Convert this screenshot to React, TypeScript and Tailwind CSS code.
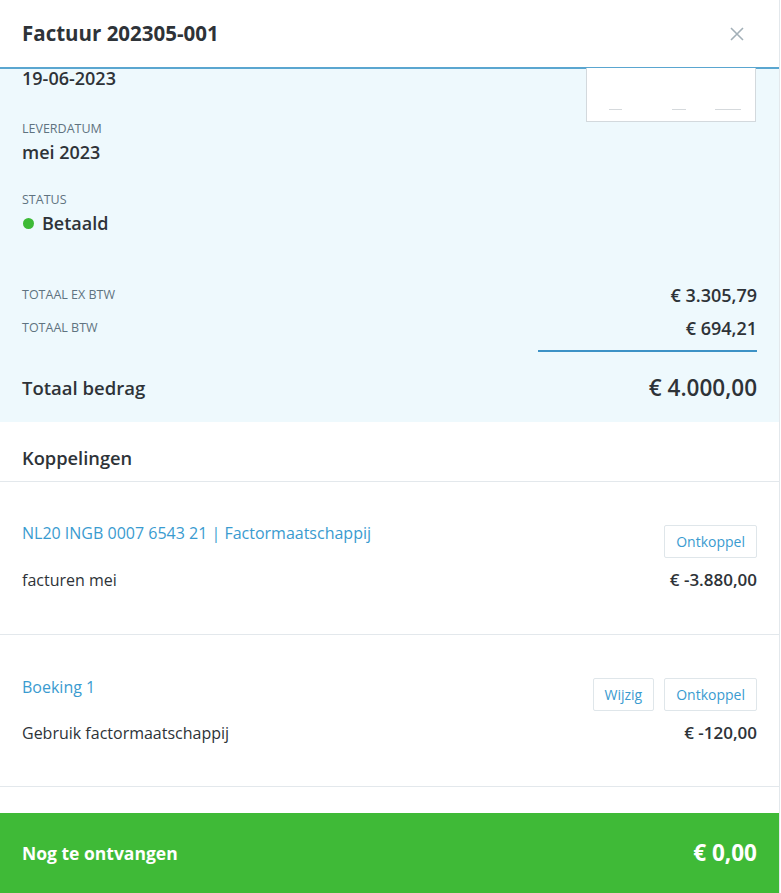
import React from "react";

interface Koppeling {
  id: number;
  title: string;
  description: string;
  amount: string;
  editable: boolean;
}

const koppelingen: Koppeling[] = [
  {
    id: 1,
    title: "NL20 INGB 0007 6543 21 | Factormaatschappij",
    description: "facturen mei",
    amount: "€ -3.880,00",
    editable: false,
  },
  {
    id: 2,
    title: "Boeking 1",
    description: "Gebruik factormaatschappij",
    amount: "€ -120,00",
    editable: true,
  },
];

const SmallButton = ({ label }: { label: string }) => (
  <button className="h-[33px] px-[11px] border border-[#dfe6ea] rounded-[2px] bg-white text-[14px] text-[#3a9bd0] leading-none">
    {label}
  </button>
);

const App = () => {
  return (
    <div
      className="w-[781px] h-[893px] overflow-hidden bg-white text-[#2e3338]"
      style={{ fontFamily: '"Open Sans", "Noto Sans", sans-serif' }}
    >
      <div className="w-[780px] h-full border-r border-[#e3e8ec] flex flex-col">
        {/* Header */}
        <div className="h-[69px] shrink-0 flex items-center justify-between px-[22px] border-b-2 border-[#5aa6d0]">
          <h1 className="text-[20.5px] font-bold text-[#2e3338]">Factuur 202305-001</h1>
          <button className="w-[16px] h-[16px] mr-[12px] text-[#a3b0b8]">
            <svg viewBox="0 0 16 16" className="w-full h-full" fill="none" stroke="currentColor" strokeWidth="1.6">
              <path d="M2 2 L14 14 M14 2 L2 14" />
            </svg>
          </button>
        </div>

        {/* Invoice details */}
        <div className="bg-[#eef9fd] px-[22px] pb-[19px] shrink-0">
          <div className="flex justify-between items-start">
            <div>
              <div className="text-[18px] font-semibold leading-[18px]">19-06-2023</div>
              <div className="mt-[34px] text-[12.5px] leading-[16px] text-[#5f7380] uppercase">Leverdatum</div>
              <div className="mt-[5px] text-[18px] font-semibold leading-[20px]">mei 2023</div>
              <div className="mt-[30px] text-[12.5px] leading-[16px] text-[#5f7380] uppercase">Status</div>
              <div className="mt-[5px] flex items-center gap-[8px] h-[20px]">
                <span className="w-[11px] h-[11px] rounded-full bg-[#3dba36] ml-px" />
                <span className="text-[18px] font-semibold leading-[20px]">Betaald</span>
              </div>
            </div>
            <div className="w-[170px] h-[54px] mt-[-1px] mr-px bg-white border-x border-b border-[#d3d9dd] flex items-end justify-between px-[22px] pb-[11px]">
              <div className="w-[13px] h-px bg-[#d5d9dc]" />
              <div className="w-[14px] h-px bg-[#d5d9dc] ml-[20px]" />
              <div className="w-[26px] h-px bg-[#d5d9dc] mr-[-8px]" />
            </div>
          </div>

          <div className="mt-[52px] flex justify-between items-center h-[20px]">
            <span className="text-[12.5px] text-[#5f7380] uppercase">Totaal ex BTW</span>
            <span className="text-[18px] font-semibold">€ 3.305,79</span>
          </div>
          <div className="mt-[13px] flex justify-between items-center h-[20px]">
            <span className="text-[12.5px] text-[#5f7380] uppercase">Totaal BTW</span>
            <span className="text-[18px] font-semibold">€ 694,21</span>
          </div>
          <div className="mt-[12px] flex justify-end">
            <div className="w-[219px] h-[2px] bg-[#3d92c6]" />
          </div>
          <div className="mt-[21px] flex justify-between items-center h-[30px]">
            <span className="text-[18.5px] font-semibold">Totaal bedrag</span>
            <span className="text-[22.5px] font-semibold">€ 4.000,00</span>
          </div>
        </div>

        {/* Koppelingen */}
        <div className="px-[22px] pt-[24px] pb-[11px] border-b border-[#e3e8ec] shrink-0">
          <h2 className="text-[18.3px] font-semibold leading-[24px]">Koppelingen</h2>
        </div>

        {koppelingen.map((k) => (
          <div
            key={k.id}
            className={
              k.editable
                ? "px-[22px] pt-[42px] pb-[43px] border-b border-[#e3e8ec] shrink-0"
                : "px-[22px] pt-[41px] pb-[44px] border-b border-[#e3e8ec] shrink-0"
            }
          >
            <div className="flex justify-between items-start">
              <span className="text-[16px] leading-[20px] text-[#3a9bd0]">{k.title}</span>
              <div className={k.editable ? "flex gap-[10px] mt-[1px]" : "flex gap-[10px] mt-[2px]"}>
                {k.editable && <SmallButton label="Wijzig" />}
                <SmallButton label="Ontkoppel" />
              </div>
            </div>
            <div className="mt-[12px] flex justify-between items-center h-[20px]">
              <span className="text-[16px]">{k.description}</span>
              <span className="text-[17px] font-semibold">{k.amount}</span>
            </div>
          </div>
        ))}

        <div className="flex-1" />

        {/* Footer */}
        <div className="h-[80px] shrink-0 bg-[#3fba37] px-[22px] flex items-center justify-between text-white">
          <span className="text-[17.5px] font-bold">Nog te ontvangen</span>
          <span className="text-[22.5px] font-bold">€ 0,00</span>
        </div>
      </div>
    </div>
  );
};

export default App;
